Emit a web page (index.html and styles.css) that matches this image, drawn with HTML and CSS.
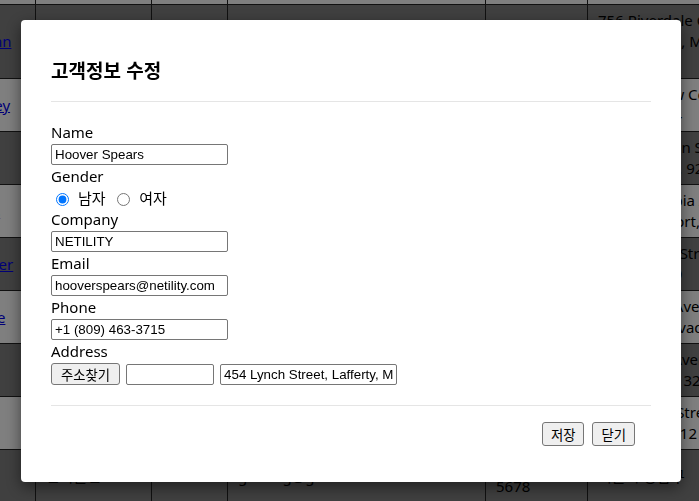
FILE: index.html
```html
<!DOCTYPE html>
<html lang="ko">
<head>
  <meta charset="UTF-8" />
  <meta name="viewport" content="width=device-width, initial-scale=1.0" />
  <title>고객관리</title>
  <link rel="stylesheet" href="styles.css">
</head>
<body>
  <table class="customers">
    <colgroup>
      <col class="c-name"><col class="c-company"><col class="c-gender"><col class="c-email"><col class="c-phone"><col class="c-address">
    </colgroup>
    <tbody>
      <tr>
        <td><a href="#">Dejesus Tran</a></td><td>ZOLAREX</td><td>male</td><td>dejesustran@zolarex.com</td><td>+1 (861) 512-3029</td><td>290 Hudson Avenue,<br>Kenmar, 7314</td>
      </tr>
      <tr>
        <td><a href="#">Alston Vaughn</a></td><td>QUILTIGEN</td><td>male</td><td>alstonvaughn@quiltigen.com</td><td>+1 (904) 455-2817</td><td>756 Riverdale Court,<br>Wheatfields, Montana,<br>4210</td>
      </tr>
      <tr>
        <td><a href="#">Bonnie Kinney</a></td><td>ISOPLEX</td><td>female</td><td>bonniekinney@isoplex.com</td><td>+1 (977) 430-2164</td><td>380 Seaview Court,<br>Cutter, 7184</td>
      </tr>
      <tr>
        <td><a href="#">Rosa Ball</a></td><td>EXOSIS</td><td>female</td><td>rosaball@exosis.com</td><td>+1 (829) 561-3320</td><td>728 Jefferson Street,<br>Brownsville, 9265</td>
      </tr>
      <tr>
        <td><a href="#">Tamika Hicks</a></td><td>ZENTIA</td><td>female</td><td>tamikahicks@zentia.com</td><td>+1 (878) 403-2954</td><td>5927 Olympia Avenue,<br>Lake Newport, 1052</td>
      </tr>
      <tr>
        <td><a href="#">Lindsay Fowler</a></td><td>MEDIFAX</td><td>male</td><td>lindsayfowler@medifax.com</td><td>+1 (942) 581-2207</td><td>2 Lafayette Street,<br>Wattsville, 9</td>
      </tr>
      <tr>
        <td><a href="#">Janette Pierce</a></td><td>OPTICON</td><td>female</td><td>janettepierce@opticon.com</td><td>+1 (815) 436-3118</td><td>811 Lenox Avenue,<br>Geneva, Nevada</td>
      </tr>
      <tr>
        <td><a href="#">Rita Sosa</a></td><td>COMTOURS</td><td>female</td><td>ritasosa@comtours.com</td><td>+1 (931) 598-2405</td><td>172 Ryder Avenue,<br>Hampshire, 3216</td>
      </tr>
      <tr>
        <td><a href="#">Vega Ortiz</a></td><td>PYRAMIS</td><td>male</td><td>vegaortiz@pyramis.com</td><td>+1 (886) 470-3791</td><td>9 Hemlock Street,<br>Sunriver, 9512</td>
      </tr>
      <tr>
        <td><a href="#">홍길동</a></td><td>한국물산</td><td>M</td><td>gildong@gmail.com</td><td>010-1234-5678</td><td>서울시 강남구</td>
      </tr>
    </tbody>
  </table>

  <div class="overlay">
    <div class="modal">
      <h3 class="modal-title">고객정보 수정</h3>
      <hr class="divider top">
      <form class="modal-body">
        <label class="field-label">Name</label>
        <input type="text" class="field" value="Hoover Spears" />

        <label class="field-label">Gender</label>
        <div class="gender">
          <label><input type="radio" name="gender" checked> 남자</label>
          <label><input type="radio" name="gender"> 여자</label>
        </div>

        <label class="field-label">Company</label>
        <input type="text" class="field" value="NETILITY" />

        <label class="field-label">Email</label>
        <input type="text" class="field" value="hooverspears@netility.com" />

        <label class="field-label">Phone</label>
        <input type="text" class="field" value="+1 (809) 463-3715" />

        <label class="field-label">Address</label>
        <div class="address">
          <button type="button" class="btn">주소찾기</button>
          <input type="text" class="field zip" value="" />
          <input type="text" class="field" value="454 Lynch Street, Lafferty, Missouri, 7411" />
        </div>
      </form>
      <hr class="divider bottom">
      <div class="modal-footer">
        <button type="button" class="btn">저장</button>
        <button type="button" class="btn">닫기</button>
      </div>
    </div>
  </div>
</body>
</html>
```

FILE: styles.css
```css
html, body {
  margin: 0;
  overflow: hidden;
}
body {
  font-family: "Noto Sans", "Noto Sans CJK KR", sans-serif;
  font-size: 15px;
  color: #000;
  background: #fff;
}

/* background list */
.customers {
  border-collapse: collapse;
  table-layout: fixed;
  width: 929px;
  margin: -49px 0 0 -102px;
}
.c-name { width: 137px; }
.c-company { width: 116px; }
.c-gender { width: 76px; }
.c-email { width: 258px; }
.c-phone { width: 102px; }
.c-address { width: 240px; }
.customers td {
  border: 1px solid #222;
  padding: 5px 10px;
  line-height: 21px;
  vertical-align: middle;
}
.customers tr:nth-child(even) {
  background: #808080;
}
.customers a {
  color: #0000ee;
}

/* modal */
.overlay {
  position: fixed;
  inset: 0;
  background: rgba(0, 0, 0, 0.5);
}
.modal {
  width: 660px;
  box-sizing: border-box;
  margin: 20px 0 0 21px;
  padding: 30px;
  background: #fff;
  border-radius: 4px;
  box-shadow: 0 5px 15px rgba(0, 0, 0, 0.5);
}
.modal-title {
  margin: 0;
  font-family: "Noto Sans CJK KR", sans-serif;
  font-size: 19px;
  font-weight: bold;
  line-height: 40px;
}
.divider {
  border: 0;
  border-top: 1px solid #e5e5e5;
}
.divider.top {
  margin: 11px 0 19px;
}
.divider.bottom {
  margin: 20px 0 16px;
}
.field-label {
  display: block;
  line-height: 23px;
}
.field {
  display: block;
  width: 177px;
  height: 21px;
  box-sizing: border-box;
  padding: 1px 3px;
  border: 1px solid #767676;
  border-radius: 2px;
  font: 13.33px "Liberation Sans", Arial, sans-serif;
  color: #000;
}
.field.zip {
  width: 88px;
}
.gender {
  height: 20px;
  line-height: 20px;
}
.gender label {
  margin-right: 3px;
}
.gender input {
  width: 13px;
  height: 13px;
  margin: 0 5px 0 5px;
  vertical-align: -2px;
}
.address {
  display: flex;
  align-items: center;
  gap: 6px;
}
.btn {
  height: 22px;
  padding: 0 9px;
  border: 1px solid #767676;
  border-radius: 3px;
  background: #efefef;
  color: #000;
  font: 13.33px "Noto Sans CJK KR", sans-serif;
}
.modal-footer {
  display: flex;
  justify-content: flex-end;
  gap: 8px;
  padding: 0 16px 6px 0;
}
.modal-footer .btn {
  height: 24px;
  padding: 0 8px;
}
```
